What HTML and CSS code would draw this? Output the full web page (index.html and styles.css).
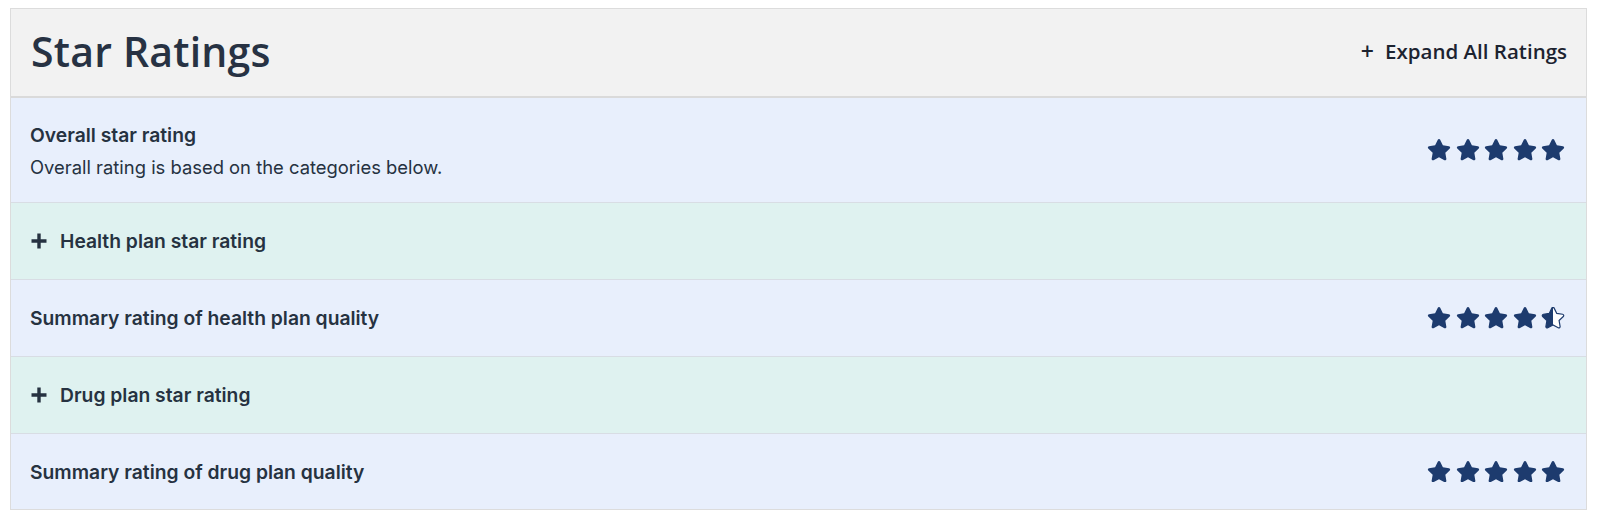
FILE: index.html
```html
<!DOCTYPE html>
<html lang="en">
<head>
<meta charset="utf-8">
<title>Star Ratings</title>
<link rel="stylesheet" href="styles.css">
</head>
<body>
<svg class="defs" width="0" height="0" aria-hidden="true">
  <defs>
    <path id="star" d="M259.3 17.8L194 150.2 47.9 171.5c-26.2 3.8-36.7 36.1-17.7 54.6l105.7 103-25 145.5c-4.5 26.3 23.2 46 46.4 33.7L288 439.6l130.7 68.7c23.2 12.2 50.9-7.4 46.4-33.7l-25-145.5 105.7-103c19-18.5 8.5-50.8-17.7-54.6L382 150.2 316.7 17.8c-11.7-23.6-45.6-23.9-57.4 0z"/>
    <clipPath id="lefthalf"><rect x="0" y="0" width="288" height="512"/></clipPath>
  </defs>
</svg>
<section class="ratings">
  <header class="ratings-head">
    <h1 class="title">Star Ratings</h1>
    <button class="expand-all"><span class="expand-plus">+</span>Expand All Ratings</button>
  </header>

  <div class="row row-blue row-tall">
    <div class="row-text">
      <div class="row-label">Overall star rating</div>
      <div class="row-desc">Overall rating is based on the categories below.</div>
    </div>
    <div class="stars">
      <svg class="star" viewBox="0 0 576 512"><use href="#star"/></svg>
      <svg class="star" viewBox="0 0 576 512"><use href="#star"/></svg>
      <svg class="star" viewBox="0 0 576 512"><use href="#star"/></svg>
      <svg class="star" viewBox="0 0 576 512"><use href="#star"/></svg>
      <svg class="star" viewBox="0 0 576 512"><use href="#star"/></svg>
    </div>
  </div>

  <div class="row row-teal">
    <div class="row-label toggle">
      <svg class="plus" viewBox="0 0 18 18"><path d="M9 1.5v15M1.5 9h15"/></svg>
      Health plan star rating
    </div>
  </div>

  <div class="row row-blue">
    <div class="row-label">Summary rating of health plan quality</div>
    <div class="stars">
      <svg class="star" viewBox="0 0 576 512"><use href="#star"/></svg>
      <svg class="star" viewBox="0 0 576 512"><use href="#star"/></svg>
      <svg class="star" viewBox="0 0 576 512"><use href="#star"/></svg>
      <svg class="star" viewBox="0 0 576 512"><use href="#star"/></svg>
      <svg class="star half" viewBox="-10 -10 596 532">
        <use href="#star" class="star-outline"/>
        <use href="#star" clip-path="url(#lefthalf)"/>
      </svg>
    </div>
  </div>

  <div class="row row-teal">
    <div class="row-label toggle">
      <svg class="plus" viewBox="0 0 18 18"><path d="M9 1.5v15M1.5 9h15"/></svg>
      Drug plan star rating
    </div>
  </div>

  <div class="row row-blue row-last">
    <div class="row-label">Summary rating of drug plan quality</div>
    <div class="stars">
      <svg class="star" viewBox="0 0 576 512"><use href="#star"/></svg>
      <svg class="star" viewBox="0 0 576 512"><use href="#star"/></svg>
      <svg class="star" viewBox="0 0 576 512"><use href="#star"/></svg>
      <svg class="star" viewBox="0 0 576 512"><use href="#star"/></svg>
      <svg class="star" viewBox="0 0 576 512"><use href="#star"/></svg>
    </div>
  </div>
</section>
</body>
</html>
```

FILE: styles.css
```css
html, body {
  background: #ffffff;
}
body {
  margin: 8px 13px 8px 10px;
  font-family: "Open Sans", "Liberation Sans", sans-serif;
  color: #263241;
}
.defs {
  position: absolute;
  width: 0;
  height: 0;
  overflow: hidden;
}
.ratings {
  border: 1px solid #dcdcdc;
}
.ratings-head {
  display: flex;
  align-items: center;
  justify-content: space-between;
  box-sizing: border-box;
  height: 89px;
  padding: 0 19px 4px 20px;
  background: #f2f2f2;
  border-bottom: 2px solid #dadada;
}
.title {
  margin: 0;
  font-family: "Open Sans", sans-serif;
  font-weight: 600;
  font-size: 41px;
  letter-spacing: 0.2px;
  color: #273243;
}
.expand-all {
  display: flex;
  align-items: center;
  border: 0;
  background: none;
  padding: 0;
  font-family: "Open Sans", sans-serif;
  font-weight: 600;
  font-size: 20.5px;
  color: #1c2330;
}
.expand-plus {
  font-size: 23px;
  font-weight: 600;
  margin-right: 11px;
}
.row {
  display: flex;
  align-items: center;
  justify-content: space-between;
  height: 76px;
  padding: 0 21px 0 19px;
  border-bottom: 1px solid #d8dde4;
}
.row-tall {
  height: 104px;
}
.row-last {
  height: 75px;
  border-bottom: 0;
}
.row-blue {
  background: #e8effc;
}
.row-teal {
  background: #dff2f0;
}
.row-text {
  padding-top: 2px;
}
.row-label {
  font-family: "Inter", "Open Sans", sans-serif;
  font-weight: 600;
  font-size: 19.3px;
  line-height: 22px;
  color: #263241;
}
.row-desc {
  margin-top: 10px;
  font-family: "Inter", "Open Sans", sans-serif;
  font-size: 18.4px;
  line-height: 22px;
  color: #263241;
}
.toggle {
  display: flex;
  align-items: center;
}
.plus {
  width: 18px;
  height: 18px;
  margin-right: 12px;
}
.plus path {
  stroke: #263241;
  stroke-width: 3.4;
  fill: none;
}
.stars {
  display: flex;
  gap: 4.5px;
}
.star {
  width: 24px;
  height: 21.3px;
  fill: #1d3b6e;
}
.star-outline {
  fill: #ffffff;
  stroke: #1d3b6e;
  stroke-width: 30;
}
```
